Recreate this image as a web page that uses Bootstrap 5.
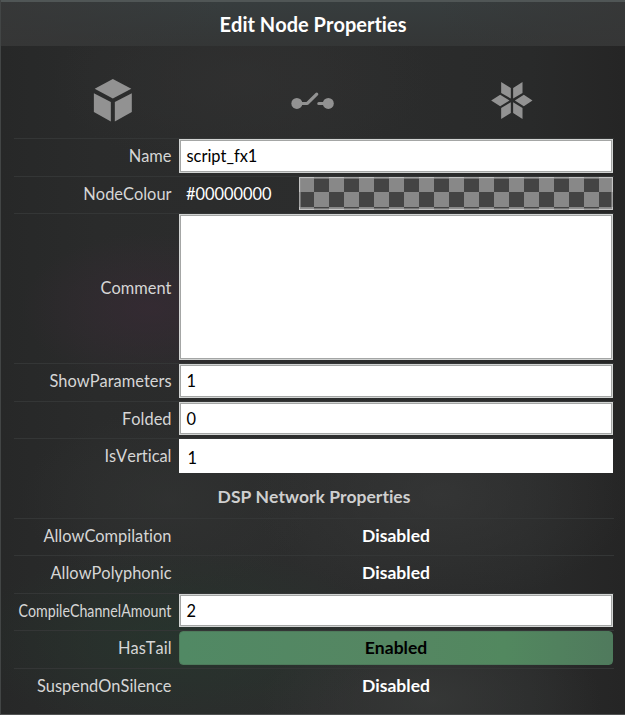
<!DOCTYPE html>
<html lang="en">
<head>
<meta charset="utf-8">
<meta name="viewport" content="width=device-width, initial-scale=1">
<title>Edit Node Properties</title>
<link href="https://cdn.jsdelivr.net/npm/bootstrap@5.3.0/dist/css/bootstrap.min.css" rel="stylesheet">
<style>
body { font-family: Lato, sans-serif; font-size: 16.4px; line-height: 20px; overflow: hidden; font-variant-ligatures: none; font-kerning: none; }
.dialog-panel {
  width: 625px; height: 715px; color: #d6d6d6;
  border-left: 1px solid #424545; border-bottom: 1px solid #505252;
  background:
    radial-gradient(ellipse 130px 75px at 150px 308px, rgba(56,42,53,.7), transparent),
    radial-gradient(ellipse 210px 95px at 180px 640px, rgba(38,56,46,.7), transparent),
    radial-gradient(ellipse 190px 110px at 440px 495px, rgba(56,57,57,.7), transparent),
    radial-gradient(ellipse 150px 90px at 170px 500px, rgba(51,53,52,.6), transparent),
    radial-gradient(ellipse 170px 90px at 430px 700px, rgba(58,60,59,.7), transparent),
    radial-gradient(ellipse 190px 90px at 240px 80px, rgba(49,49,49,.7), transparent),
    linear-gradient(90deg, #272828, #2a2b2b 15%, #2c2d2d 50%, #292a2a 85%, #252525);
}
.title-bar {
  height: 46px; border-top: 2px solid #505656; color: #fff; font-size: 20px;
  background: linear-gradient(90deg, rgba(54,54,54,.75), transparent 35%, transparent 70%, rgba(54,54,54,.75)), linear-gradient(#373d3e, #343636);
}
.tab-icons { height: 92px; padding: 0 13px; }
.tab-icons svg { fill: #929292; display: block; }
.props { padding: 0 11px 0 13px; }
.prop { height: 38px; border-top: 1px solid #343636; }
.prop.h37 { height: 37px; }
.prop.tall { height: 150px; }
.prop-label { width: 157.5px; margin-right: 7.5px; padding-bottom: 3px; }
.h37 .prop-label { padding-bottom: 2px; }
.tall .prop-label { padding-bottom: 1px; }
.prop-value { width: 434px; height: 34px; }
.h37 .prop-value { height: 33px; }
.tall .prop-value { height: 146px; }
.field { background: #fff; color: #000; border: 1px solid #d2d4d3; box-shadow: inset 0 0 0 1px #a4a6a5; padding-left: 6.5px; }
.field.editing { border-color: #fff; box-shadow: none; padding: 3px 0 0 7.5px; }
.swatch {
  width: 314px; height: 33px; border: 1px solid rgba(255,255,255,.5);
  background: repeating-conic-gradient(#444 0 25%, #888 0 50%) 0 0 / 30px 30px border-box;
  background-origin: border-box; box-shadow: inset 0 0 0 1px rgba(150,150,150,.6);
}
.colour-text { width: 120px; padding-left: 7px; color: #fff; }
.state { color: #fff; font-size: 17.5px; }
.state.on { color: #000; background: linear-gradient(90deg, #518964, #558662 50%, #52885f 75%, #507a5d); border: 1px solid #4d7b5b; border-radius: 4px; }
.section-title { height: 42px; color: #cfcfcf; font-size: 17.5px; padding-bottom: 2px; }
.squeezed { transform: scaleX(.867); transform-origin: right; }
</style>
</head>
<body>
<main class="dialog-panel d-flex flex-column">
  <header class="title-bar d-flex align-items-center justify-content-center fw-bold"><span class="title-text">Edit Node Properties</span></header>
  <nav class="tab-icons d-flex align-items-center">
    <svg width="199" height="92" viewBox="14 46 199 92"><path d="M113 79l18.5 9.7L113 98.5l-18.2-9.8zM94 93.3l17 8.8v19.4L94 112zM132 93.3l-17 8.8v19.4l17-9.5z"/></svg>
    <svg width="200" height="92" viewBox="213 46 200 92"><circle cx="297" cy="103.5" r="5.5"/><circle cx="328.5" cy="103.5" r="5.5"/><path d="M297 103.5h10.5l9.4-9.4M319 103.5h10" fill="none" stroke="#929292" stroke-width="3.2" stroke-linecap="round" stroke-linejoin="round"/></svg>
    <svg width="200" height="92" viewBox="412 46 200 92"><path d="M501.3 82l9.7 6v10.6l-9.7-5.6zM522.7 82l-9.4 6v10.6l9.4-5.6zM501.3 119l9.7-6v-10.7l-9.7 5.7zM522.7 119l-9.4-6v-10.7l9.4 5.7zM491.3 100.6l9-5.8 9.4 5.8-9.4 5.7zM515 100.6l9-5.8 8.7 5.8-8.7 5.7z"/></svg>
  </nav>
  <section class="props">
    <div class="prop d-flex"><label class="prop-label text-end align-self-center">Name</label><div class="prop-value field d-flex align-items-center">script_fx1</div></div>
    <div class="prop h37 d-flex"><label class="prop-label text-end align-self-center">NodeColour</label><div class="prop-value d-flex align-items-center"><span class="colour-text">#00000000</span><div class="swatch"></div></div></div>
    <div class="prop tall d-flex"><label class="prop-label text-end align-self-center">Comment</label><div class="prop-value field"></div></div>
    <div class="prop d-flex"><label class="prop-label text-end align-self-center">ShowParameters</label><div class="prop-value field d-flex align-items-center">1</div></div>
    <div class="prop h37 d-flex"><label class="prop-label text-end align-self-center">Folded</label><div class="prop-value field d-flex align-items-center">0</div></div>
    <div class="prop d-flex"><label class="prop-label text-end align-self-center">IsVertical</label><div class="prop-value field editing d-flex align-items-center">1</div></div>
    <h2 class="section-title d-flex align-items-center justify-content-center fw-bold mb-0"><span>DSP Network Properties</span></h2>
    <div class="prop h37 d-flex"><label class="prop-label text-end align-self-center">AllowCompilation</label><div class="prop-value state fw-bold d-flex align-items-center justify-content-center">Disabled</div></div>
    <div class="prop d-flex"><label class="prop-label text-end align-self-center">AllowPolyphonic</label><div class="prop-value state fw-bold d-flex align-items-center justify-content-center">Disabled</div></div>
    <div class="prop h37 d-flex"><label class="prop-label d-flex justify-content-end align-self-center"><span class="squeezed">CompileChannelAmount</span></label><div class="prop-value field d-flex align-items-center">2</div></div>
    <div class="prop d-flex"><label class="prop-label text-end align-self-center">HasTail</label><div class="prop-value state on fw-bold d-flex align-items-center justify-content-center">Enabled</div></div>
    <div class="prop h37 d-flex"><label class="prop-label text-end align-self-center">SuspendOnSilence</label><div class="prop-value state fw-bold d-flex align-items-center justify-content-center">Disabled</div></div>
  </section>
</main>
<script src="https://cdn.jsdelivr.net/npm/bootstrap@5.3.0/dist/js/bootstrap.bundle.min.js"></script>
</body>
</html>
